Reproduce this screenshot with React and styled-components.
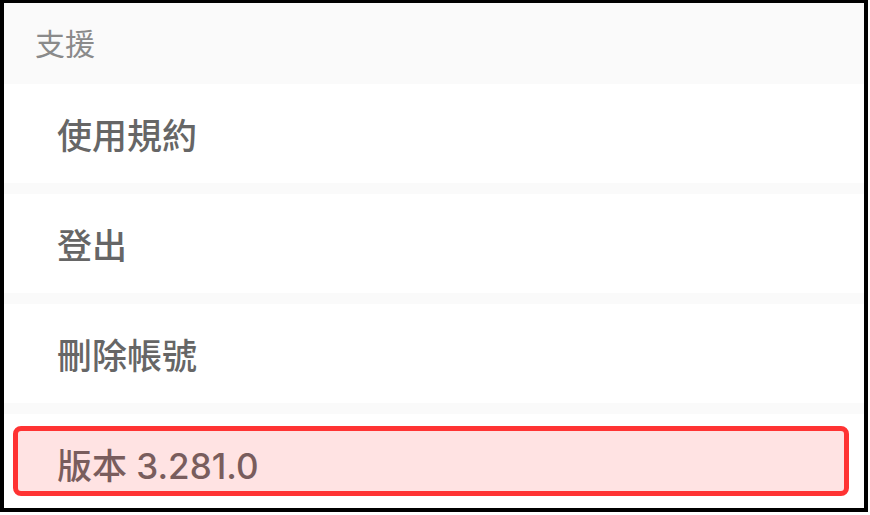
import React from "react";
import styled, { createGlobalStyle } from "styled-components";

const GlobalStyle = createGlobalStyle`
  html, body {
    margin: 0;
    padding: 0;
    background: #ffffff;
  }
  body {
    font-family: Inter, "Noto Sans CJK TC", sans-serif;
  }
`;

const items = ["使用規約", "登出", "刪除帳號"];

export default function App() {
  return (
    <>
      <GlobalStyle />
      <Frame>
        <SectionHeader>支援</SectionHeader>
        {items.map((label) => (
          <React.Fragment key={label}>
            <Row>{label}</Row>
            <Divider />
          </React.Fragment>
        ))}
        <Row>
          版本 3.281.0
          <Highlight />
        </Row>
      </Frame>
    </>
  );
}

const Frame = styled.div`
  box-sizing: border-box;
  width: 868px;
  height: 512px;
  border: 4px solid #000;
  border-top-width: 3px;
  overflow: hidden;
  display: flex;
  flex-direction: column;
  background: #ffffff;
`;

const SectionHeader = styled.div`
  flex: none;
  height: 81px;
  box-sizing: border-box;
  padding: 0 0 4px 31px;
  display: flex;
  align-items: center;
  background: #fafafa;
  color: #8a8a8a;
  font-size: 30px;
  font-weight: 400;
`;

const Row = styled.div`
  position: relative;
  flex: none;
  height: 99px;
  box-sizing: border-box;
  padding-left: 53px;
  display: flex;
  align-items: center;
  background: #ffffff;
  color: #666666;
  font-size: 35px;
  font-weight: 500;
`;

const Divider = styled.div`
  flex: none;
  height: 11px;
  background: #fafafa;
`;

const Highlight = styled.div`
  position: absolute;
  left: 9px;
  top: 12px;
  width: 836px;
  height: 70px;
  box-sizing: border-box;
  border: 5px solid #ff3333;
  border-radius: 8px;
  background: rgba(255, 40, 40, 0.13);
`;
